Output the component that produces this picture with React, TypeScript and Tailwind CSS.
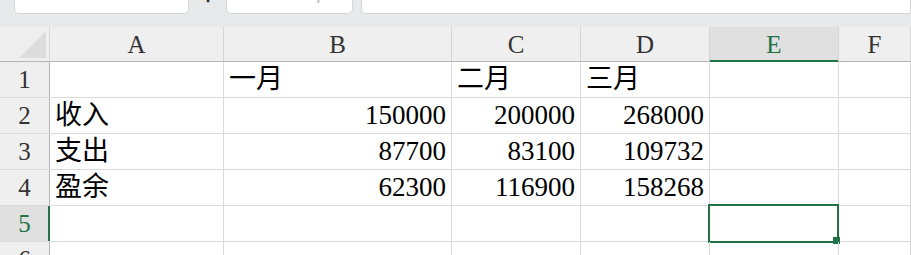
import * as React from "react";

const FONT = { fontFamily: '"Liberation Serif", "Noto Sans CJK SC", serif' };

// column widths include each column's right border
const COLS = [
  { key: "A", w: "w-[174px]" },
  { key: "B", w: "w-[228px]" },
  { key: "C", w: "w-[129px]" },
  { key: "D", w: "w-[129px]" },
  { key: "E", w: "w-[129px]" },
  { key: "F", w: "flex-1" },
];

type Cell = { text?: string; num?: boolean };

const ROWS: Cell[][] = [
  [{}, { text: "一月" }, { text: "二月" }, { text: "三月" }, {}, {}],
  [{ text: "收入" }, { text: "150000", num: true }, { text: "200000", num: true }, { text: "268000", num: true }, {}, {}],
  [{ text: "支出" }, { text: "87700", num: true }, { text: "83100", num: true }, { text: "109732", num: true }, {}, {}],
  [{ text: "盈余" }, { text: "62300", num: true }, { text: "116900", num: true }, { text: "158268", num: true }, {}, {}],
  [{}, {}, {}, {}, {}, {}],
  [{}, {}, {}, {}, {}, {}],
];

function Toolbar() {
  return (
    <div className="flex h-[27px] shrink-0 items-start overflow-hidden bg-[#e8e9eb]">
      <div className="-mt-[16px] ml-[14px] flex h-[30px] w-[175px] items-end rounded-b-[5px] border border-[#d6d6d6] bg-white pb-[12px] pl-[8px]">
        <span className="text-[17px] font-bold leading-none text-black" style={{ fontFamily: '"Liberation Sans", sans-serif' }}>
          E5
        </span>
      </div>
      <div className="-mt-[16px] flex h-[30px] w-[37px] items-end justify-center pb-[12px]">
        <span className="text-[18px] font-bold leading-none text-[#333]">⋮</span>
      </div>
      <div className="-mt-[16px] flex h-[30px] w-[127px] items-end gap-[22px] rounded-b-[5px] border border-[#d6d6d6] bg-white pb-[12px] pl-[10px] text-[#b8b8b8]">
        <span className="text-[18px] leading-none">✕</span>
        <span className="text-[18px] leading-none">✓</span>
        <span className="ml-[6px] text-[20px] italic leading-none" style={FONT}>
          fx
        </span>
      </div>
      <div className="-mt-[16px] ml-[8px] h-[30px] flex-1 rounded-bl-[5px] border border-[#d6d6d6] bg-white" />
    </div>
  );
}

function HeaderRow() {
  return (
    <div className="flex h-[35px] shrink-0 border-b border-[#b5b5b5] bg-[#efefef]">
      <div className="flex w-[50px] items-end justify-end border-r border-[#d8d8d8] pb-[3px] pr-[3px]">
        <svg width="27" height="27" viewBox="0 0 27 27">
          <polygon points="27,0 27,27 0,27" fill="#dcdcdc" />
        </svg>
      </div>
      {COLS.map((c) => {
        const sel = c.key === "E";
        return (
          <div
            key={c.key}
            className={`relative flex ${c.w} items-center justify-center border-r border-[#d4d4d4] text-[25px] leading-none ${
              sel ? "bg-[#e0e0e0] text-[#217346]" : "text-[#333]"
            }`}
            style={FONT}
          >
            {c.key}
            {sel && <div className="absolute -bottom-[1px] left-0 right-0 h-[2px] bg-[#217346]" />}
          </div>
        );
      })}
    </div>
  );
}

function DataRow({ n, cells }: { n: number; cells: Cell[] }) {
  const selRow = n === 5;
  return (
    <div className="flex h-[36px] shrink-0 border-b border-[#dadada]">
      <div
        className={`relative flex w-[50px] items-center justify-center border-r border-[#b5b5b5] text-[25px] leading-none ${
          selRow ? "bg-[#e0e0e0] text-[#217346]" : "bg-[#efefef] text-[#333]"
        }`}
        style={FONT}
      >
        {n}
        {selRow && <div className="absolute -right-[1px] top-0 bottom-0 w-[2px] bg-[#217346]" />}
      </div>
      {cells.map((cell, i) => {
        const col = COLS[i];
        const active = selRow && col.key === "E";
        return (
          <div
            key={col.key}
            className={`relative flex ${col.w} items-center border-r border-[#dadada] px-[5px] text-[27px] leading-none text-black ${
              cell.num ? "justify-end" : "justify-start"
            }`}
            style={FONT}
          >
            {cell.text}
            {active && (
              <div className="absolute -left-[2px] -top-[2px] h-[39px] w-[131px] border-2 border-[#217346]">
                <div className="absolute -bottom-[3px] -right-[3px] size-[7px] bg-[#217346]" />
              </div>
            )}
          </div>
        );
      })}
    </div>
  );
}

export default function App() {
  return (
    <div className="flex h-[255px] w-[911px] flex-col overflow-hidden bg-white">
      <Toolbar />
      <HeaderRow />
      {ROWS.map((cells, i) => (
        <DataRow key={i} n={i + 1} cells={cells} />
      ))}
    </div>
  );
}
